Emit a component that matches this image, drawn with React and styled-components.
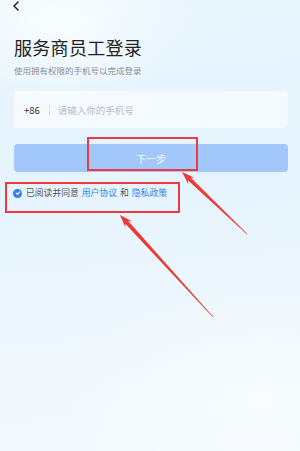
import React from 'react'
import styled, { createGlobalStyle } from 'styled-components'

const GlobalStyle = createGlobalStyle`
  html, body { margin: 0; padding: 0; }
  body { font-family: "Noto Sans CJK SC", "Noto Sans", sans-serif; }
`;

const Page = styled.div`
  position: relative;
  width: 300px;
  height: 451px;
  overflow: hidden;
  box-sizing: border-box;
  padding: 0 12px 0 14px;
  background:
    radial-gradient(ellipse 140px 80px at 60px 20px, rgba(250,254,255,0.9), rgba(250,254,255,0) 100%),
    radial-gradient(ellipse 200px 120px at 260px 400px, rgba(248,252,255,0.9), rgba(248,252,255,0) 100%),
    linear-gradient(175deg, #eaf6fe 0%, #e5f3fd 35%, #ebf6fd 60%, #f2f9fe 85%, #f4fafe 100%);
  display: flex;
  flex-direction: column;
`;

const BackRow = styled.div`
  height: 12px;
  display: flex;
  align-items: center;
  margin-left: -2px;
  svg { display: block; }
`;

const Title = styled.h1`
  margin: 23px 0 0;
  font-size: 18px;
  line-height: 24px;
  font-weight: 400;
  color: #222;
  letter-spacing: 0.3px;
`;

const Subtitle = styled.p`
  margin: 5px 0 0;
  font-size: 8.5px;
  line-height: 12px;
  color: #8a8f96;
`;

const InputBox = styled.div`
  margin-top: 15px;
  height: 37px;
  border-radius: 4px;
  background: rgba(255,255,255,0.55);
  display: flex;
  align-items: center;
  padding-left: 10px;
  font-size: 9.5px;
`;

const Code = styled.span`
  color: #333;
`;

const Divider = styled.span`
  width: 1px;
  height: 10px;
  background: #d8dde3;
  margin: 0 8px 0 9px;
`;

const Placeholder = styled.span`
  color: #b9bec4;
  font-size: 9.5px;
`;

const NextButton = styled.div`
  margin-top: 16px;
  height: 28px;
  border-radius: 4px;
  background: #a2c8fb;
  color: rgba(255,255,255,0.92);
  font-size: 10px;
  display: flex;
  align-items: center;
  justify-content: center;
`;

const Agree = styled.div`
  margin-top: 15px;
  display: flex;
  align-items: center;
  font-size: 8.8px;
  line-height: 12px;
  color: #555a61;
`;

const Check = styled.span`
  width: 9px;
  height: 9px;
  border-radius: 50%;
  background: #3b7cf0;
  display: flex;
  align-items: center;
  justify-content: center;
  margin: 0 4px 0 -1px;
`;

const Link = styled.span`
  color: #2f86ee;
  margin: 0 3px;
`;

const Mark = styled.div`
  position: absolute;
  z-index: 2;
  box-sizing: border-box;
  border: 2px solid #ee3a3c;
  left: ${p => p.$x}px;
  top: ${p => p.$y}px;
  width: ${p => p.$w}px;
  height: ${p => p.$h}px;
`;

const Overlay = styled.svg`
  position: absolute;
  z-index: 3;
  left: 0;
  top: 0;
  pointer-events: none;
`;

function arrowPoints([tx, ty], [sx, sy]) {
  const dx = sx - tx, dy = sy - ty;
  const len = Math.hypot(dx, dy);
  const ux = dx / len, uy = dy / len;
  const nx = -uy, ny = ux;
  const head = 13, hw = 4.5, sw = 2;
  const bx = tx + ux * head, by = ty + uy * head;
  const nb = tx + ux * (head - 3), nby = ty + uy * (head - 3);
  const pts = [
    [tx, ty],
    [bx + nx * hw, by + ny * hw],
    [nb + nx * sw, nby + ny * sw],
    [sx + nx * 0.3, sy + ny * 0.3],
    [sx - nx * 0.3, sy - ny * 0.3],
    [nb - nx * sw, nby - ny * sw],
    [bx - nx * hw, by - ny * hw],
  ];
  return pts.map(p => p.map(v => v.toFixed(1)).join(',')).join(' ');
}

export default function App() {
  return (
    <>
      <GlobalStyle />
      <Page>
        <BackRow>
          <svg width="8" height="10" viewBox="0 0 8 10">
            <path d="M6 1 L2 5 L6 9" fill="none" stroke="#222" strokeWidth="1.5" strokeLinecap="round" strokeLinejoin="round" />
          </svg>
        </BackRow>
        <Title>服务商员工登录</Title>
        <Subtitle>使用拥有权限的手机号以完成登录</Subtitle>
        <InputBox>
          <Code>+86</Code>
          <Divider />
          <Placeholder>请输入你的手机号</Placeholder>
        </InputBox>
        <NextButton>下一步</NextButton>
        <Agree>
          <Check>
            <svg width="6" height="6" viewBox="0 0 6 6">
              <path d="M1.2 3.1 L2.5 4.3 L4.8 1.8" fill="none" stroke="#fff" strokeWidth="1.1" strokeLinecap="round" strokeLinejoin="round" />
            </svg>
          </Check>
          已阅读并同意
          <Link>用户协议</Link>
          和
          <Link>隐私政策</Link>
        </Agree>

        <Mark $x={87} $y={137} $w={111} $h={34} />
        <Mark $x={5} $y={182} $w={175} $h={31} />
        <Overlay width="300" height="451">
          <polygon points={arrowPoints([182, 172], [247, 234])} fill="#ee3a36" />
          <polygon points={arrowPoints([120, 215], [213, 317])} fill="#ee3a36" />
        </Overlay>
      </Page>
    </>
  )
}
